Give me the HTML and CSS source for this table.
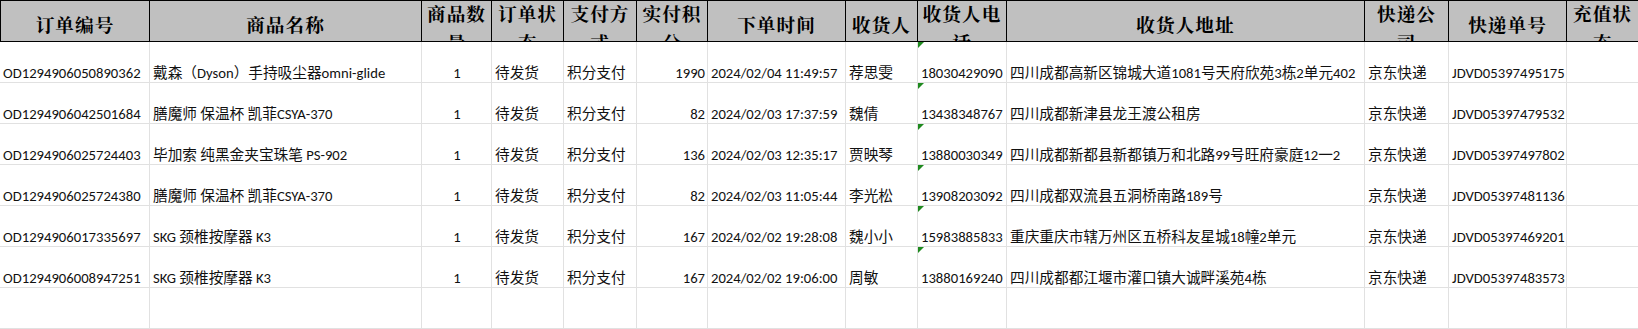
FILE: index.html
```html
<!DOCTYPE html>
<html lang="zh-CN">
<head>
<meta charset="utf-8">
<title>订单导出</title>
<link rel="stylesheet" href="styles.css">
</head>
<body>
<div class="sheet">
  <div class="h first">订单编号</div>
  <div class="h">商品名称</div>
  <div class="h h2"><span>商品数<br>量</span></div>
  <div class="h h2"><span>订单状<br>态</span></div>
  <div class="h h2"><span>支付方<br>式</span></div>
  <div class="h h2"><span>实付积<br>分</span></div>
  <div class="h">下单时间</div>
  <div class="h">收货人</div>
  <div class="h h2"><span>收货人电<br>话</span></div>
  <div class="h">收货人地址</div>
  <div class="h h2"><span>快递公<br>司</span></div>
  <div class="h">快递单号</div>
  <div class="h h2"><span>充值状<br>态</span></div>

  <div class="c">OD1294906050890362</div>
  <div class="c">戴森（Dyson）手持吸尘器omni-glide</div>
  <div class="c ctr">1</div>
  <div class="c">待发货</div>
  <div class="c">积分支付</div>
  <div class="c num">1990</div>
  <div class="c">2024/02/04 11:49:57</div>
  <div class="c">荐思雯</div>
  <div class="c tri">18030429090</div>
  <div class="c">四川成都高新区锦城大道1081号天府欣苑3栋2单元402</div>
  <div class="c">京东快递</div>
  <div class="c">JDVD05397495175</div>
  <div class="c"></div>

  <div class="c">OD1294906042501684</div>
  <div class="c">膳魔师 保温杯 凯菲CSYA-370</div>
  <div class="c ctr">1</div>
  <div class="c">待发货</div>
  <div class="c">积分支付</div>
  <div class="c num">82</div>
  <div class="c">2024/02/03 17:37:59</div>
  <div class="c">魏倩</div>
  <div class="c tri">13438348767</div>
  <div class="c">四川成都新津县龙王渡公租房</div>
  <div class="c">京东快递</div>
  <div class="c">JDVD05397479532</div>
  <div class="c"></div>

  <div class="c">OD1294906025724403</div>
  <div class="c">毕加索 纯黑金夹宝珠笔 PS-902</div>
  <div class="c ctr">1</div>
  <div class="c">待发货</div>
  <div class="c">积分支付</div>
  <div class="c num">136</div>
  <div class="c">2024/02/03 12:35:17</div>
  <div class="c">贾映琴</div>
  <div class="c tri">13880030349</div>
  <div class="c">四川成都新都县新都镇万和北路99号旺府豪庭12一2</div>
  <div class="c">京东快递</div>
  <div class="c">JDVD05397497802</div>
  <div class="c"></div>

  <div class="c">OD1294906025724380</div>
  <div class="c">膳魔师 保温杯 凯菲CSYA-370</div>
  <div class="c ctr">1</div>
  <div class="c">待发货</div>
  <div class="c">积分支付</div>
  <div class="c num">82</div>
  <div class="c">2024/02/03 11:05:44</div>
  <div class="c">李光松</div>
  <div class="c tri">13908203092</div>
  <div class="c">四川成都双流县五洞桥南路189号</div>
  <div class="c">京东快递</div>
  <div class="c">JDVD05397481136</div>
  <div class="c"></div>

  <div class="c">OD1294906017335697</div>
  <div class="c">SKG 颈椎按摩器 K3</div>
  <div class="c ctr">1</div>
  <div class="c">待发货</div>
  <div class="c">积分支付</div>
  <div class="c num">167</div>
  <div class="c">2024/02/02 19:28:08</div>
  <div class="c">魏小小</div>
  <div class="c tri">15983885833</div>
  <div class="c">重庆重庆市辖万州区五桥科友星城18幢2单元</div>
  <div class="c">京东快递</div>
  <div class="c">JDVD05397469201</div>
  <div class="c"></div>

  <div class="c">OD1294906008947251</div>
  <div class="c">SKG 颈椎按摩器 K3</div>
  <div class="c ctr">1</div>
  <div class="c">待发货</div>
  <div class="c">积分支付</div>
  <div class="c num">167</div>
  <div class="c">2024/02/02 19:06:00</div>
  <div class="c">周敏</div>
  <div class="c tri">13880169240</div>
  <div class="c">四川成都都江堰市灌口镇大诚畔溪苑4栋</div>
  <div class="c">京东快递</div>
  <div class="c">JDVD05397483573</div>
  <div class="c"></div>

  <div class="c"></div><div class="c"></div><div class="c"></div><div class="c"></div>
  <div class="c"></div><div class="c"></div><div class="c"></div><div class="c"></div>
  <div class="c"></div><div class="c"></div><div class="c"></div><div class="c"></div>
  <div class="c"></div>
</div>
</body>
</html>
```

FILE: styles.css
```css
html, body {
  margin: 0;
  padding: 0;
  background: #ffffff;
}

.sheet {
  display: grid;
  grid-template-columns: 150px 272px 70px 72px 73px 71px 138px 72px 89px 358px 84px 118px 72px;
  grid-template-rows: 42px repeat(7, 41px);
  width: 1638px;
  overflow: hidden;
}

.h {
  box-sizing: border-box;
  background: #c0c0c0;
  border-top: 1px solid #000;
  border-right: 1px solid #000;
  border-bottom: 1px solid #000;
  font-family: "Noto Serif CJK SC", "Noto Sans CJK SC", serif;
  font-weight: 700;
  font-size: 18.67px;
  letter-spacing: 1px;
  line-height: 29px;
  color: #000;
  text-align: center;
  padding-top: 9px;
  overflow: hidden;
  white-space: nowrap;
}

.h.first {
  border-left: 1px solid #000;
}

.h.h2 {
  padding-top: 0;
}

.h.h2 span {
  display: block;
  margin-top: -2px;
}

.c {
  box-sizing: border-box;
  position: relative;
  border-right: 1px solid #e1e1e1;
  border-bottom: 1px solid #e1e1e1;
  font-family: Carlito, "Noto Sans CJK SC", sans-serif;
  font-size: 14.67px;
  line-height: 18px;
  color: #111;
  display: flex;
  align-items: flex-end;
  padding: 0 2px 0 3px;
  white-space: nowrap;
  overflow: hidden;
}

.c.ctr {
  justify-content: center;
}

.c.num {
  justify-content: flex-end;
}

.c.tri::before {
  content: "";
  position: absolute;
  left: 0;
  top: 0;
  width: 6px;
  height: 6px;
  background: #1f8a1f;
  clip-path: polygon(0 0, 100% 0, 0 100%);
}
```
